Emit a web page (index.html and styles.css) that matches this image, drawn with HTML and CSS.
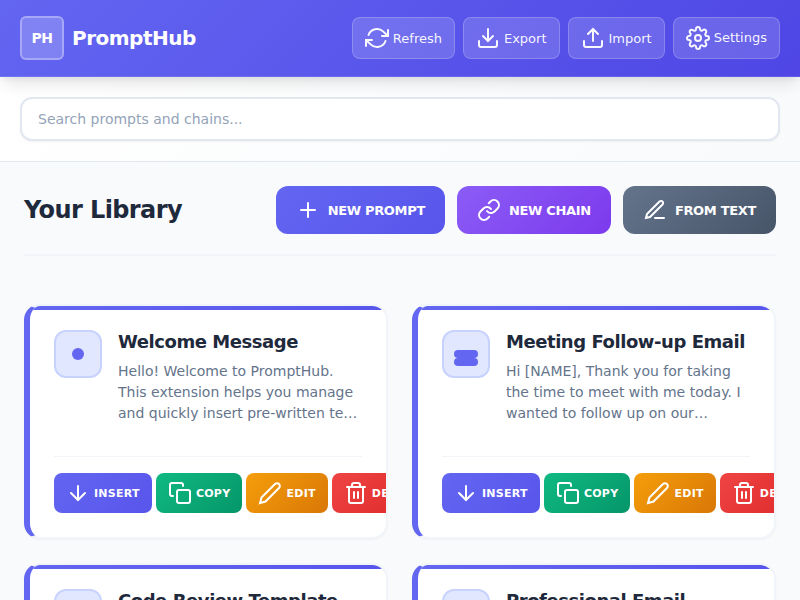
FILE: index.html
```html
<!DOCTYPE html>
<html lang="en">
<head>
<meta charset="utf-8">
<title>PromptHub</title>
<link rel="stylesheet" href="styles.css">
</head>
<body>
<svg class="sprite" width="0" height="0">
  <symbol id="refresh" viewBox="0 0 24 24"><path d="M23 4v6h-6M1 20v-6h6M3.51 9a9 9 0 0 1 14.85-3.36L23 10M1 14l4.64 4.36A9 9 0 0 0 20.49 15"/></symbol>
  <symbol id="download" viewBox="0 0 24 24"><path d="M21 15v4a2 2 0 0 1-2 2H5a2 2 0 0 1-2-2v-4M7 10l5 5 5-5M12 15V3"/></symbol>
  <symbol id="upload" viewBox="0 0 24 24"><path d="M21 15v4a2 2 0 0 1-2 2H5a2 2 0 0 1-2-2v-4M17 8l-5-5-5 5M12 3v12"/></symbol>
  <symbol id="gear" viewBox="0 0 24 24"><circle cx="12" cy="12" r="3"/><path d="M19.4 15a1.65 1.65 0 0 0 .33 1.82l.06.06a2 2 0 0 1 0 2.83 2 2 0 0 1-2.83 0l-.06-.06a1.65 1.65 0 0 0-1.82-.33 1.65 1.65 0 0 0-1 1.51V21a2 2 0 0 1-2 2 2 2 0 0 1-2-2v-.09A1.65 1.65 0 0 0 9 19.4a1.65 1.65 0 0 0-1.82.33l-.06.06a2 2 0 0 1-2.83 0 2 2 0 0 1 0-2.83l.06-.06a1.65 1.65 0 0 0 .33-1.82 1.65 1.65 0 0 0-1.51-1H3a2 2 0 0 1-2-2 2 2 0 0 1 2-2h.09A1.65 1.65 0 0 0 4.6 9a1.65 1.65 0 0 0-.33-1.82l-.06-.06a2 2 0 0 1 0-2.83 2 2 0 0 1 2.83 0l.06.06a1.65 1.65 0 0 0 1.82.33H9a1.65 1.65 0 0 0 1-1.51V3a2 2 0 0 1 2-2 2 2 0 0 1 2 2v.09a1.65 1.65 0 0 0 1 1.51 1.65 1.65 0 0 0 1.82-.33l.06-.06a2 2 0 0 1 2.83 0 2 2 0 0 1 0 2.83l-.06.06a1.65 1.65 0 0 0-.33 1.82V9a1.65 1.65 0 0 0 1.51 1H21a2 2 0 0 1 2 2 2 2 0 0 1-2 2h-.09a1.65 1.65 0 0 0-1.51 1z"/></symbol>
  <symbol id="plus" viewBox="0 0 24 24"><path d="M12 5v14M5 12h14"/></symbol>
  <symbol id="link" viewBox="0 0 24 24"><path d="M10 13a5 5 0 0 0 7.54.54l3-3a5 5 0 0 0-7.07-7.07l-1.72 1.71M14 11a5 5 0 0 0-7.54-.54l-3 3a5 5 0 0 0 7.07 7.07l1.71-1.71"/></symbol>
  <symbol id="pen-line" viewBox="0 0 24 24"><path d="M12 20h9M16.5 3.5a2.121 2.121 0 0 1 3 3L7 19l-4 1 1-4L16.5 3.5z"/></symbol>
  <symbol id="arrow-down" viewBox="0 0 24 24"><path d="M12 5v14M19 12l-7 7-7-7"/></symbol>
  <symbol id="copy" viewBox="0 0 24 24"><rect x="9" y="9" width="13" height="13" rx="2"/><path d="M5 15H4a2 2 0 0 1-2-2V4a2 2 0 0 1 2-2h9a2 2 0 0 1 2 2v1"/></symbol>
  <symbol id="pencil" viewBox="0 0 24 24"><path d="M17 3a2.828 2.828 0 1 1 4 4L7.5 20.5 2 22l1.5-5.5L17 3z"/></symbol>
  <symbol id="trash" viewBox="0 0 24 24"><path d="M3 6h18M19 6v14a2 2 0 0 1-2 2H7a2 2 0 0 1-2-2V6m3 0V4a2 2 0 0 1 2-2h4a2 2 0 0 1 2 2v2M10 11v6M14 11v6"/></symbol>
</svg>

<header class="header">
  <div class="brand">
    <div class="logo">PH</div>
    <h1 class="brand-name">PromptHub</h1>
  </div>
  <nav class="header-actions">
    <button class="ghost refresh"><svg class="icon"><use href="#refresh"/></svg><span>Refresh</span></button>
    <button class="ghost"><svg class="icon"><use href="#download"/></svg><span>Export</span></button>
    <button class="ghost"><svg class="icon"><use href="#upload"/></svg><span>Import</span></button>
    <button class="ghost settings"><svg class="icon"><use href="#gear"/></svg><span>Settings</span></button>
  </nav>
</header>

<section class="search">
  <input class="search-input" type="text" placeholder="Search prompts and chains...">
</section>

<main class="main">
  <div class="library-header">
    <h2 class="library-title">Your Library</h2>
    <div class="library-actions">
      <button class="btn prompt"><svg class="icon"><use href="#plus"/></svg>New Prompt</button>
      <button class="btn chain"><svg class="icon"><use href="#link"/></svg>New Chain</button>
      <button class="btn text"><svg class="icon"><use href="#pen-line"/></svg>From Text</button>
    </div>
  </div>

  <div class="grid">
    <article class="card">
      <div class="card-head">
        <div class="card-icon"><span class="dot"></span></div>
        <div class="card-body">
          <h3 class="card-title">Welcome Message</h3>
          <p class="card-text">Hello! Welcome to PromptHub.<br>This extension helps you manage<br>and quickly insert pre-written te…</p>
        </div>
      </div>
      <div class="card-actions">
        <button class="act insert"><svg class="icon"><use href="#arrow-down"/></svg>Insert</button>
        <button class="act copy"><svg class="icon"><use href="#copy"/></svg>Copy</button>
        <button class="act edit"><svg class="icon"><use href="#pencil"/></svg>Edit</button>
        <button class="act delete"><svg class="icon"><use href="#trash"/></svg>Delete</button>
      </div>
    </article>
    <article class="card">
      <div class="card-head">
        <div class="card-icon"><span class="bars"><i></i><i></i></span></div>
        <div class="card-body">
          <h3 class="card-title">Meeting Follow-up Email</h3>
          <p class="card-text">Hi [NAME], Thank you for taking<br>the time to meet with me today. I<br>wanted to follow up on our…</p>
        </div>
      </div>
      <div class="card-actions">
        <button class="act insert"><svg class="icon"><use href="#arrow-down"/></svg>Insert</button>
        <button class="act copy"><svg class="icon"><use href="#copy"/></svg>Copy</button>
        <button class="act edit"><svg class="icon"><use href="#pencil"/></svg>Edit</button>
        <button class="act delete"><svg class="icon"><use href="#trash"/></svg>Delete</button>
      </div>
    </article>
    <article class="card">
      <div class="card-head">
        <div class="card-icon"></div>
        <div class="card-body"><h3 class="card-title">Code Review Template</h3></div>
      </div>
    </article>
    <article class="card">
      <div class="card-head">
        <div class="card-icon"></div>
        <div class="card-body"><h3 class="card-title">Professional Email</h3></div>
      </div>
    </article>
  </div>
</main>
</body>
</html>
```

FILE: styles.css
```css
* { box-sizing: border-box; margin: 0; padding: 0; }

body {
  height: 600px;
  overflow: hidden;
  background: #f8fafc;
  color: #1e293b;
  font-family: "DejaVu Sans", sans-serif;
  font-size: 14px;
  line-height: 1.5;
}

button { font-family: inherit; border: 0; color: #fff; white-space: nowrap; }

.sprite { display: block; height: 0; }

.icon {
  flex: none;
  width: 24px;
  height: 24px;
  fill: none;
  stroke: currentColor;
  stroke-width: 2;
  stroke-linecap: round;
  stroke-linejoin: miter;
}

.header {
  position: relative;
  display: flex;
  align-items: center;
  justify-content: space-between;
  height: 77px;
  padding: 0 20px;
  background: linear-gradient(135deg, #6366f1 0%, #4f46e5 100%);
  border-bottom: 1px solid rgba(255, 255, 255, 0.1);
  box-shadow: 0 10px 15px -3px rgba(0, 0, 0, 0.1), 0 4px 6px -2px rgba(0, 0, 0, 0.05);
}

.brand { display: flex; align-items: center; gap: 8px; }

.logo {
  display: flex;
  align-items: center;
  justify-content: center;
  width: 44px;
  height: 44px;
  border: 2px solid rgba(255, 255, 255, 0.3);
  border-radius: 6px;
  background: rgba(255, 255, 255, 0.2);
  color: #fff;
  font-size: 14px;
  font-weight: 700;
  letter-spacing: -0.5px;
}

.brand-name { color: #fff; font-size: 20px; font-weight: 700; letter-spacing: -0.5px; }

.header-actions { display: flex; gap: 8px; }

.ghost {
  display: flex;
  align-items: center;
  gap: 4px;
  height: 42px;
  padding: 0 12px;
  border: 1px solid rgba(255, 255, 255, 0.2);
  border-radius: 8px;
  background: rgba(255, 255, 255, 0.15);
  color: rgba(255, 255, 255, 0.95);
  font-size: 13px;
}

.settings span { margin-top: -2px; }

.search {
  height: 85px;
  padding: 20px;
  border-bottom: 1px solid #e2e8f0;
  background: linear-gradient(135deg, #fff 0%, #f8fafc 100%);
}

.search-input {
  display: block;
  width: 100%;
  height: 44px;
  padding: 0 16px;
  border: 2px solid #e2e8f0;
  border-radius: 12px;
  background: #fff;
  box-shadow: 0 1px 2px rgba(0, 0, 0, 0.05);
  font: 14px "DejaVu Sans", sans-serif;
}

.search-input::placeholder { color: #94a3b8; }

.main { padding: 24px; }

.library-header {
  display: flex;
  align-items: center;
  justify-content: space-between;
  height: 70px;
  padding-bottom: 20px;
  border-bottom: 2px solid #f1f5f9;
}

.library-title { font-size: 24px; font-weight: 700; letter-spacing: -0.6px; }

.library-actions { display: flex; gap: 12px; }

.btn {
  display: flex;
  align-items: center;
  gap: 8px;
  height: 48px;
  padding: 0 20px;
  border-radius: 12px;
  font-size: 13px;
  font-weight: 700;
  letter-spacing: -0.325px;
  text-transform: uppercase;
}

.prompt { background: linear-gradient(135deg, #6366f1, #5855eb); }
.chain { background: linear-gradient(135deg, #8b5cf6, #7c3aed); }
.text { background: linear-gradient(135deg, #64748b, #475569); }

.grid {
  display: grid;
  grid-template-columns: repeat(2, 364px);
  grid-auto-rows: 235px;
  gap: 24px;
  margin-top: 48px;
}

.card {
  position: relative;
  overflow: hidden;
  padding: 24px;
  border: 2px solid #f1f5f9;
  border-left: 6px solid #6366f1;
  border-radius: 16px;
  background: #fff;
  box-shadow: 0 1px 2px rgba(0, 0, 0, 0.04);
}

.card::before {
  content: "";
  position: absolute;
  top: 0;
  left: 0;
  right: 0;
  height: 4px;
  background: linear-gradient(90deg, #6366f1, #5855eb);
}

.card-head { display: flex; gap: 16px; height: 126px; }

.card-icon {
  display: flex;
  flex: none;
  align-items: center;
  justify-content: center;
  width: 48px;
  height: 48px;
  border: 2px solid #c7d2fe;
  border-radius: 12px;
  background: #e0e7ff;
}

.dot { width: 12px; height: 12px; border-radius: 50%; background: #6366f1; }

.bars { margin-top: 8px; }
.bars i { display: block; width: 24px; height: 8px; border-radius: 4px; background: #6366f1; }

.card-body { white-space: nowrap; }
.card-title { margin-bottom: 8px; font-size: 18px; font-weight: 700; line-height: 23px; letter-spacing: -0.45px; }
.card-text { color: #64748b; line-height: 21px; }

.card-actions {
  display: flex;
  gap: 4px;
  padding-top: 16px;
  border-top: 1px solid #f1f5f9;
}

.act {
  display: flex;
  flex: none;
  align-items: center;
  gap: 4px;
  height: 40px;
  padding: 0 12px;
  border-radius: 8px;
  font-size: 11px;
  font-weight: 700;
  letter-spacing: 0.275px;
  text-transform: uppercase;
}

.insert { background: linear-gradient(135deg, #6366f1, #5855eb); }
.copy { background: linear-gradient(135deg, #10b981, #059669); }
.edit { background: linear-gradient(135deg, #f59e0b, #d97706); }
.delete { background: linear-gradient(135deg, #ef4444, #dc2626); }
```
